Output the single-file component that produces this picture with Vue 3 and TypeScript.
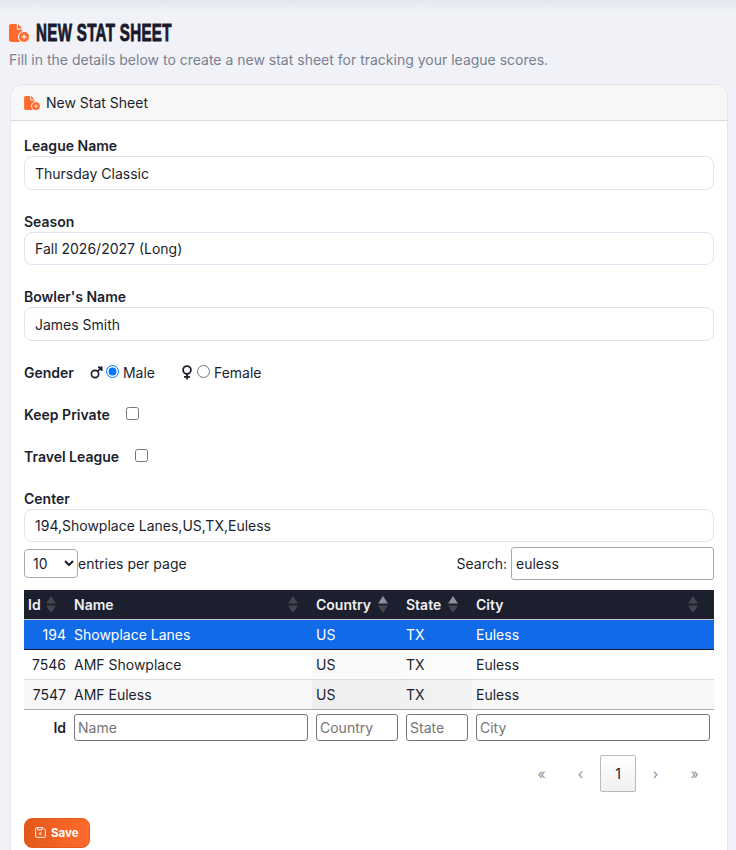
<template>
  <div class="page">
    <h1 class="page-title">
      <svg class="title-icon" viewBox="0 0 576 512"><path :d="fileCirclePlus" /></svg>
      <span class="title-text">NEW STAT SHEET</span>
    </h1>
    <p class="page-subtitle">Fill in the details below to create a new stat sheet for tracking your league scores.</p>

    <div class="card">
      <div class="card-header">
        <svg class="header-icon" viewBox="0 0 576 512"><path :d="fileCirclePlus" /></svg>
        New Stat Sheet
      </div>
      <div class="card-body">
        <div class="field">
          <label class="field-label">League Name</label>
          <input class="text-input" type="text" v-model="leagueName" />
        </div>
        <div class="field">
          <label class="field-label">Season</label>
          <input class="text-input" type="text" v-model="season" />
        </div>
        <div class="field">
          <label class="field-label">Bowler's Name</label>
          <input class="text-input" type="text" v-model="bowler" />
        </div>

        <div class="inline-row">
          <span class="field-label">Gender</span>
          <svg class="gender-icon mars" viewBox="0 0 14 14">
            <circle cx="5.4" cy="8.6" r="3.9" />
            <path d="M8.2 5.8 12.4 1.6M8.6 1.4h4v4" />
          </svg>
          <input class="radio" type="radio" name="gender" value="male" v-model="gender" />
          <span class="radio-text">Male</span>
          <svg class="gender-icon venus" viewBox="0 0 12 15">
            <circle cx="6" cy="5" r="3.9" />
            <path d="M6 9v5.4M3 11.8h6" />
          </svg>
          <input class="radio" type="radio" name="gender" value="female" v-model="gender" />
          <span class="radio-text">Female</span>
        </div>
        <div class="inline-row">
          <span class="field-label">Keep Private</span>
          <input class="check" type="checkbox" />
        </div>
        <div class="inline-row">
          <span class="field-label">Travel League</span>
          <input class="check" type="checkbox" />
        </div>

        <div class="field center-field">
          <label class="field-label">Center</label>
          <input class="text-input" type="text" v-model="center" />
        </div>

        <div class="dt-top">
          <div class="dt-length">
            <select class="dt-select">
              <option>10</option>
              <option>25</option>
              <option>50</option>
            </select>
            <span>entries per page</span>
          </div>
          <div class="dt-search">
            <label>Search:</label>
            <input class="dt-search-input" type="text" v-model="search" />
          </div>
        </div>

        <table class="dt-table">
          <colgroup>
            <col v-for="col in columns" :key="col.key" :style="{ width: col.width + 'px' }" />
          </colgroup>
          <thead>
            <tr>
              <th v-for="col in columns" :key="col.key">
                {{ col.label }}
                <svg class="sort-icon" viewBox="0 0 10 17">
                  <path d="M5 0l5 7.500H0z" :class="col.sorted ? 'arrow-on' : 'arrow-off'" />
                  <path d="M0 9.500h10L5 17z" class="arrow-off" />
                </svg>
              </th>
            </tr>
          </thead>
          <tbody>
            <tr v-for="row in rows" :key="row.id" :class="{ selected: row.id === selectedId }">
              <td class="num">{{ row.id }}</td>
              <td>{{ row.name }}</td>
              <td class="sort-1">{{ row.country }}</td>
              <td class="sort-2">{{ row.state }}</td>
              <td>{{ row.city }}</td>
            </tr>
          </tbody>
          <tfoot>
            <tr>
              <th class="foot-id">Id</th>
              <th v-for="col in columns.slice(1)" :key="col.key">
                <input class="foot-input" type="text" :placeholder="col.label" />
              </th>
            </tr>
          </tfoot>
        </table>

        <div class="pagination">
          <span class="page-btn">«</span>
          <span class="page-btn">‹</span>
          <span class="page-btn current">1</span>
          <span class="page-btn">›</span>
          <span class="page-btn">»</span>
        </div>

        <button class="save-btn" type="button">
          <svg class="save-icon" viewBox="0 0 12 12">
            <path d="M1.500.7h7.300l2.500 2.500v7a1.100 1.100 0 0 1-1.100 1.100H1.800A1.100 1.100 0 0 1 .7 10.200V1.800A1.100 1.100 0 0 1 1.800.7z" />
            <path d="M3 .9v2.400h4.600V.9" />
            <circle cx="6" cy="7.300" r="1.100" />
          </svg>
          Save
        </button>
      </div>
    </div>
  </div>
</template>

<script setup lang="ts">
import { ref } from 'vue';

interface Column {
  key: string;
  label: string;
  width: number;
  sorted: boolean;
}

interface CenterRow {
  id: number;
  name: string;
  country: string;
  state: string;
  city: string;
}

const fileCirclePlus =
  'M0 64C0 28.700 28.700 0 64 0H224V128c0 17.700 14.300 32 32 32H384v38.600C310.100 219.500 256 287.400 256 368c0 59.100 29.100 111.300 73.700 143.300c-3.200 .5-6.400 .7-9.700 .7H64c-35.300 0-64-28.700-64-64V64zm384 64H256V0L384 128zm48 96a144 144 0 1 1 0 288 144 144 0 1 1 0-288zm16 80c0-8.800-7.200-16-16-16s-16 7.200-16 16v48H368c-8.800 0-16 7.200-16 16s7.200 16 16 16h48v48c0 8.800 7.200 16 16 16s16-7.200 16-16V384h48c8.800 0 16-7.200 16-16s-7.200-16-16-16H448V304z';

const leagueName = ref('Thursday Classic');
const season = ref('Fall 2026/2027 (Long)');
const bowler = ref('James Smith');
const gender = ref('male');
const center = ref('194,Showplace Lanes,US,TX,Euless');
const search = ref('euless');
const selectedId = ref(194);

const columns: Column[] = [
  { key: 'id', label: 'Id', width: 46, sorted: false },
  { key: 'name', label: 'Name', width: 242, sorted: false },
  { key: 'country', label: 'Country', width: 90, sorted: true },
  { key: 'state', label: 'State', width: 70, sorted: true },
  { key: 'city', label: 'City', width: 242, sorted: false },
];

const rows: CenterRow[] = [
  { id: 194, name: 'Showplace Lanes', country: 'US', state: 'TX', city: 'Euless' },
  { id: 7546, name: 'AMF Showplace', country: 'US', state: 'TX', city: 'Euless' },
  { id: 7547, name: 'AMF Euless', country: 'US', state: 'TX', city: 'Euless' },
];
</script>

<style>
html,
body {
  margin: 0;
  height: 850px;
  overflow: hidden;
  background: #f0f2f8;
}
</style>

<style scoped>
.page {
  box-sizing: border-box;
  height: 850px;
  overflow: hidden;
  padding: 20px 8px 0 9px;
  font-family: Inter, "Liberation Sans", sans-serif;
  font-size: 14px;
  color: #1c1f2e;
  background:
    linear-gradient(to bottom, rgba(20, 25, 50, 0.05), rgba(20, 25, 50, 0) 12px),
    repeating-linear-gradient(-45deg, rgba(255, 255, 255, 0) 0 90px, rgba(255, 255, 255, 0.25) 90px 91px),
    #f0f2f8;
}

.page-title {
  display: flex;
  align-items: center;
  gap: 7px;
  margin: 0;
  height: 26px;
}

.title-icon {
  width: 20px;
  height: 18px;
  fill: #ff6b2c;
}

/* no condensed display face is installed, so squeeze the bold sans */
.title-text {
  display: inline-block;
  font-family: "Liberation Sans", sans-serif;
  font-weight: 700;
  font-size: 24px;
  line-height: 26px;
  letter-spacing: 0.5px;
  -webkit-text-stroke: 0.9px #1a1a2e;
  color: #1a1a2e;
  transform: scaleX(0.63);
  transform-origin: left center;
}

.page-subtitle {
  margin: 5px 0 0;
  line-height: 18px;
  color: #7a808f;
}

.card {
  margin: 15px 0 0 1px;
  background: #fff;
  border: 1px solid #e3e6f0;
  border-bottom: 0;
  border-radius: 13px 13px 0 0;
}

.card-header {
  display: flex;
  align-items: center;
  gap: 6px;
  height: 35px;
  padding-left: 13px;
  background: #f7f7f7;
  border-bottom: 1px solid #dcdcdc;
  border-radius: 12px 12px 0 0;
}

.header-icon {
  width: 16px;
  height: 14px;
  fill: #ff6b2c;
}

.card-body {
  padding: 15px 13px 20px;
}

.field {
  margin-bottom: 22px;
}

.center-field {
  margin-bottom: 4.500px;
}

.field-label {
  display: block;
  height: 20px;
  line-height: 20px;
  font-weight: 600;
  color: #1c1f2e;
}

.text-input {
  display: block;
  box-sizing: border-box;
  width: 100%;
  height: 33.500px;
  padding: 1px 10px 0;
  border: 1px solid #e0e3f0;
  border-radius: 8px;
  background: #fff;
  font: inherit;
  color: #1c1f2e;
  outline: none;
}

.inline-row {
  display: flex;
  align-items: center;
  height: 20px;
  margin-bottom: 22px;
}

.gender-icon {
  fill: none;
  stroke: #1c1f2e;
  stroke-width: 1.800;
}

.mars {
  width: 13px;
  height: 13px;
  margin-left: 16px;
}

.venus {
  width: 12px;
  height: 15px;
  margin-left: 26px;
}

.radio {
  width: 13px;
  height: 13px;
  margin: 0 0 2px 4px;
}

.mars + .radio {
  margin-left: 3px;
}

.radio-text {
  margin-left: 4px;
}

.check {
  width: 13px;
  height: 13px;
  margin: 0 0 2px 16px;
}

.dt-top {
  display: flex;
  align-items: center;
  justify-content: space-between;
  height: 33px;
  margin-bottom: 10px;
}

.dt-length {
  display: flex;
  align-items: center;
}

.dt-select {
  box-sizing: border-box;
  width: 54px;
  height: 29px;
  padding: 0 4px;
  border: 1px solid #aaa;
  border-radius: 4px;
  background: #fff;
  font: inherit;
  color: #1c1f2e;
}

.dt-search {
  display: flex;
  align-items: center;
  gap: 4px;
}

.dt-search-input {
  box-sizing: border-box;
  width: 203px;
  height: 33px;
  padding: 0 4px;
  border: 1px solid #aaa;
  border-radius: 3px;
  font: inherit;
  color: #1c1f2e;
}

.dt-table {
  width: 690px;
  table-layout: fixed;
  border-collapse: collapse;
}

.dt-table thead th {
  position: relative;
  height: 29px;
  padding: 0 4px;
  background: #1c1f2e;
  border-bottom: 1px solid #c8c8c8;
  color: #f0f0f0;
  font-weight: 600;
  text-align: left;
}

.sort-icon {
  position: absolute;
  top: 6px;
  right: 14px;
  width: 10px;
  height: 17px;
}

.dt-table thead th:last-child .sort-icon {
  right: 16px;
}

.arrow-on {
  fill: #8e909a;
}

.arrow-off {
  fill: #44464f;
}

.dt-table td {
  height: 29px;
  padding: 0 4px;
  border-bottom: 1px solid #dcdcdc;
}

.dt-table td.num {
  text-align: right;
}

.dt-table tbody tr:nth-child(2) .sort-1 {
  background: #f9f9f9;
}

.dt-table tbody tr:nth-child(2) .sort-2 {
  background: #fbfbfb;
}

.dt-table tbody tr:nth-child(3) td {
  background: #f7f7f7;
  border-bottom: 1px solid #aaa;
}

.dt-table tbody tr:nth-child(3) .sort-1 {
  background: #efefef;
}

.dt-table tbody tr:nth-child(3) .sort-2 {
  background: #f1f1f1;
}

.dt-table tbody tr.selected td {
  background: #116ae8;
  color: #fff;
  border-bottom: 1px solid #1a1a2e;
}

.dt-table tfoot th {
  height: 31px;
  padding: 4px 4px 0;
  box-sizing: border-box;
  text-align: left;
}

.dt-table tfoot .foot-id {
  text-align: right;
  font-weight: 600;
}

.foot-input {
  display: block;
  box-sizing: border-box;
  width: 100%;
  height: 27px;
  padding: 0 3px;
  border: 1px solid #767676;
  border-radius: 3px;
  font-family: inherit;
  font-size: 14px;
  font-weight: 400;
}

.foot-input::placeholder {
  color: #757575;
}

.pagination {
  display: flex;
  justify-content: flex-end;
  align-items: center;
  margin-top: 14px;
  height: 37px;
}

.page-btn {
  display: flex;
  align-items: center;
  justify-content: center;
  width: 39px;
  height: 37px;
  color: #8a8f98;
}

.page-btn.current {
  box-sizing: border-box;
  width: 36px;
  border: 1px solid #bbb;
  border-radius: 2px;
  background: linear-gradient(to bottom, #fff, #f0f0f0);
  color: #1c1f2e;
}

.save-btn {
  display: flex;
  align-items: center;
  gap: 5px;
  box-sizing: border-box;
  width: 66px;
  height: 30px;
  margin-top: 26px;
  padding: 0 0 0 10px;
  border: 1px solid #e0591c;
  border-radius: 8px;
  background: linear-gradient(to right, #e2591a, #ff6b2c);
  color: #fff;
  font-family: inherit;
  font-size: 11.500px;
  font-weight: 700;
}

.save-icon {
  width: 11px;
  height: 11px;
  fill: none;
  stroke: #fff;
  stroke-width: 1;
}
</style>
